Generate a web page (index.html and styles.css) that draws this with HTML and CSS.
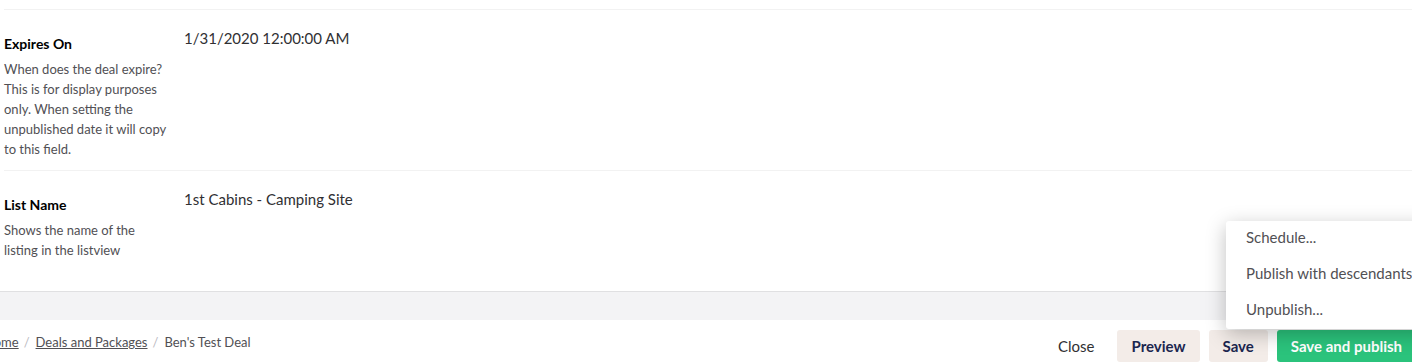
FILE: index.html
```
<!DOCTYPE html>
<html>
<head>
<meta charset="utf-8">
<link rel="stylesheet" href="styles.css">
</head>
<body>
<div class="app">
  <div class="content">
    <div class="prop">
      <div class="label-col">
        <div class="label">Expires On</div>
        <div class="desc">When does the deal expire? This is for display purposes only. When setting the unpublished date it will copy to this field.</div>
      </div>
      <div class="value">1/31/2020 12:00:00 AM</div>
    </div>
    <div class="prop">
      <div class="label-col">
        <div class="label">List Name</div>
        <div class="desc">Shows the name of the listing in the listview</div>
      </div>
      <div class="value">1st Cabins - Camping Site</div>
    </div>
  </div>
  <div class="band"></div>
  <div class="footer">
    <div class="crumbs">
      <a href="#">Home</a><span class="sep">/</span><a href="#">Deals and Packages</a><span class="sep">/</span><span class="current">Ben's Test Deal</span>
    </div>
    <div class="actions">
      <button class="btn btn-link">Close</button>
      <button class="btn btn-default">Preview</button>
      <button class="btn btn-default">Save</button>
      <div class="split">
        <button class="btn btn-success">Save and publish</button>
        <button class="btn btn-success btn-caret"><span class="caret"></span></button>
      </div>
    </div>
  </div>
  <div class="menu">
    <div class="menu-item">Schedule...</div>
    <div class="menu-item">Publish with descendants...</div>
    <div class="menu-item">Unpublish...</div>
  </div>
</div>
</body>
</html>
```
FILE: styles.css
```
html, body {
  margin: 0;
  padding: 0;
  overflow: hidden;
  background: #fff;
}
body {
  font-family: Lato, "Open Sans", sans-serif;
  color: #303033;
  width: 1412px;
  height: 362px;
}
.app {
  position: relative;
  width: 1412px;
  height: 362px;
  display: flex;
  flex-direction: column;
}
.content {
  height: 291px;
  padding: 0 0 0 4px;
  box-sizing: border-box;
  overflow: hidden;
}
.prop {
  display: flex;
  border-top: 1px solid #f2f2f2;
  padding: 18px 0 11px 0;
  margin-top: 9px;
}
.prop + .prop {
  margin-top: 0;
}
.label-col {
  width: 180px;
  flex: none;
  padding-top: 6px;
}
.label {
  font-weight: 700;
  font-size: 14px;
  line-height: 20px;
  color: #000;
}
.desc {
  width: 162px;
  margin-top: 5px;
  font-size: 13px;
  line-height: 20px;
  color: #515054;
}
.value {
  font-size: 15px;
  line-height: 20px;
  color: #303033;
}
.band {
  height: 28px;
  background: #f3f3f5;
  border-top: 1px solid #e0e0e2;
  flex: none;
}
.footer {
  flex: 1;
  display: flex;
  align-items: flex-start;
  justify-content: space-between;
  margin-right: -45px;
}
.crumbs {
  margin-left: -16px;
  margin-top: 12px;
  font-size: 13px;
  color: #515054;
  line-height: 20px;
}
.crumbs a {
  color: #515054;
  text-decoration: underline;
}
.crumbs .sep {
  color: #bbbabf;
  margin: 0 6px 0 5px;
}
.actions {
  display: flex;
  align-items: center;
  gap: 9px;
  margin-top: 10px;
}
.btn {
  font-family: Lato, "Open Sans", sans-serif;
  font-size: 15px;
  font-weight: 700;
  height: 32px;
  line-height: 32px;
  padding: 0 14px;
  border: 0;
  border-radius: 3px;
  color: #1b264f;
  background: #f3ece8;
  cursor: pointer;
}
.btn-link {
  background: transparent;
  font-weight: 400;
  color: #303033;
  padding: 0 14px;
}
.btn-default {
  background: #f3ece8;
}
.split {
  display: flex;
  gap: 1px;
}
.btn-success {
  background: #2bc37c;
  color: #fff;
  padding: 0 14px;
  border-radius: 3px 0 0 3px;
}
.btn-caret {
  width: 40px;
  padding: 0;
  border-radius: 0 3px 3px 0;
}
.caret {
  display: inline-block;
  border-top: 5px solid #fff;
  border-left: 5px solid transparent;
  border-right: 5px solid transparent;
  vertical-align: middle;
}
.menu {
  position: absolute;
  left: 1226px;
  top: 221px;
  width: 230px;
  padding: 0;
  background: #fff;
  border-radius: 3px;
  box-shadow: 0 5px 20px rgba(0, 0, 0, 0.25);
  z-index: 10;
}
.menu-item {
  padding: 6px 20px 10px 20px;
  font-size: 15px;
  line-height: 20px;
  color: #515054;
  white-space: nowrap;
}
```
